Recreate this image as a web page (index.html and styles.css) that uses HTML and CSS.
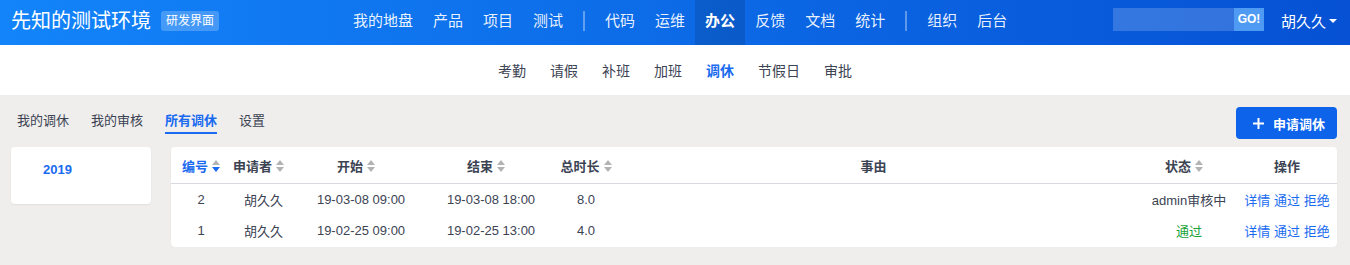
FILE: index.html
```html
<!DOCTYPE html>
<html lang="zh-CN">
<head>
    <meta charset="UTF-8">
    <title>调休 - 先知的测试环境</title>
    <link rel="stylesheet" href="styles.css">
</head>
<body>
    <header class="topbar">
        <div class="brand">
            <span class="brand-name">先知的测试环境</span>
            <span class="brand-tag">研发界面</span>
        </div>
        <nav class="mainnav">
            <a href="#">我的地盘</a>
            <a href="#">产品</a>
            <a href="#">项目</a>
            <a href="#">测试</a>
            <span class="divider"></span>
            <a href="#">代码</a>
            <a href="#">运维</a>
            <a href="#" class="active">办公</a>
            <a href="#">反馈</a>
            <a href="#">文档</a>
            <a href="#">统计</a>
            <span class="divider"></span>
            <a href="#">组织</a>
            <a href="#">后台</a>
        </nav>
        <div class="search">
            <input type="text">
            <button>GO!</button>
        </div>
        <div class="user">胡久久<span class="caret"></span></div>
    </header>

    <div class="subnav">
        <a href="#">考勤</a>
        <a href="#">请假</a>
        <a href="#">补班</a>
        <a href="#">加班</a>
        <a href="#" class="active">调休</a>
        <a href="#">节假日</a>
        <a href="#">审批</a>
    </div>

    <div class="page">
        <div class="toolbar">
            <div class="tabs">
                <a href="#">我的调休</a>
                <a href="#">我的审核</a>
                <a href="#" class="active">所有调休</a>
                <a href="#">设置</a>
            </div>
            <a href="#" class="btn-primary">
                <svg width="11" height="11" viewBox="0 0 11 11"><path d="M5.5 0v11M0 5.5h11" stroke="#fff" stroke-width="2"/></svg>
                申请调休
            </a>
        </div>

        <div class="main">
            <div class="side card">
                <a href="#" class="year">2019</a>
            </div>
            <div class="card list">
                <table>
                    <colgroup>
                        <col style="width:60px">
                        <col style="width:65px">
                        <col style="width:130px">
                        <col style="width:130px">
                        <col style="width:60px">
                        <col>
                        <col style="width:106px">
                        <col style="width:100px">
                    </colgroup>
                    <thead>
                        <tr>
                            <th class="sorted">编号<svg class="sort" width="8" height="12" viewBox="0 0 8 12"><path d="M0 5L4 0L8 5Z" fill="#b3b3b3"/><path d="M0 7H8L4 12Z" fill="#1a6bf0"/></svg></th>
                            <th class="shift">申请者<svg class="sort" width="8" height="12" viewBox="0 0 8 12"><path d="M0 5L4 0L8 5ZM0 7H8L4 12Z" fill="#b3b3b3"/></svg></th>
                            <th class="shift">开始<svg class="sort" width="8" height="12" viewBox="0 0 8 12"><path d="M0 5L4 0L8 5ZM0 7H8L4 12Z" fill="#b3b3b3"/></svg></th>
                            <th class="shift">结束<svg class="sort" width="8" height="12" viewBox="0 0 8 12"><path d="M0 5L4 0L8 5ZM0 7H8L4 12Z" fill="#b3b3b3"/></svg></th>
                            <th>总时长<svg class="sort" width="8" height="12" viewBox="0 0 8 12"><path d="M0 5L4 0L8 5ZM0 7H8L4 12Z" fill="#b3b3b3"/></svg></th>
                            <th>事由</th>
                            <th>状态<svg class="sort" width="8" height="12" viewBox="0 0 8 12"><path d="M0 5L4 0L8 5ZM0 7H8L4 12Z" fill="#b3b3b3"/></svg></th>
                            <th>操作</th>
                        </tr>
                    </thead>
                    <tbody>
                        <tr>
                            <td>2</td>
                            <td>胡久久</td>
                            <td>19-03-08 09:00</td>
                            <td>19-03-08 18:00</td>
                            <td>8.0</td>
                            <td></td>
                            <td class="status">admin审核中</td>
                            <td class="actions"><a href="#">详情</a> <a href="#">通过</a> <a href="#">拒绝</a></td>
                        </tr>
                        <tr>
                            <td>1</td>
                            <td>胡久久</td>
                            <td>19-02-25 09:00</td>
                            <td>19-02-25 13:00</td>
                            <td>4.0</td>
                            <td></td>
                            <td class="status pass">通过</td>
                            <td class="actions"><a href="#">详情</a> <a href="#">通过</a> <a href="#">拒绝</a></td>
                        </tr>
                    </tbody>
                </table>
            </div>
        </div>
    </div>
</body>
</html>
```

FILE: styles.css
```css
body{
    margin:0;
    background-color:#efeeec;
    color:#3c4353;
    font-family:"Liberation Sans","Noto Sans CJK SC",sans-serif;
    font-size:13px;
}
a{
    color:inherit;
    text-decoration:none;
}

/* top bar */
.topbar{
    display:flex;
    align-items:center;
    height:45px;
    padding:0 13px 0 11px;
    background:linear-gradient(90deg,#1384fa 0%,#0651d4 100%);
    color:#fff;
}
.brand{
    display:flex;
    align-items:center;
}
.brand-name{
    font-size:20px;
    line-height:24px;
    margin-top:-4px;
}
.brand-tag{
    margin-left:10px;
    margin-top:-4px;
    padding:0 5px;
    height:20px;
    line-height:20px;
    font-size:12px;
    border-radius:3px;
    background-color:rgba(255,255,255,.22);
}
.mainnav{
    display:flex;
    align-items:center;
    height:100%;
    margin-left:124px;
}
.mainnav>a{
    height:100%;
    padding:0 10px;
    line-height:41px;
    font-size:15px;
    color:rgba(255,255,255,.92);
}
.mainnav>a.active{
    background-color:rgba(0,0,0,.12);
    color:#fff;
    font-weight:bold;
}
.mainnav .divider{
    width:2px;
    height:20px;
    margin:-4px 10px 0;
    background-color:rgba(255,255,255,.35);
}
.search{
    display:flex;
    margin-left:auto;
    margin-top:-7px;
    height:23px;
}
.search input{
    width:121px;
    height:23px;
    box-sizing:border-box;
    border:0;
    padding:0 6px;
    background-color:rgba(255,255,255,.18);
    color:#fff;
    outline:none;
}
.search button{
    width:30px;
    height:23px;
    padding:0;
    border:0;
    background-color:#4f9bf4;
    color:#fff;
    font-family:"Liberation Sans",sans-serif;
    font-size:12px;
    font-weight:bold;
}
.user{
    display:flex;
    align-items:center;
    margin-left:17px;
    margin-top:-4px;
    font-size:15px;
}
.caret{
    width:0;
    height:0;
    margin-left:3px;
    border-left:4px solid transparent;
    border-right:4px solid transparent;
    border-top:4px solid #fff;
}

/* sub nav */
.subnav{
    display:flex;
    justify-content:center;
    align-items:center;
    gap:24px;
    height:50px;
    background-color:#fff;
    font-size:14px;
}
.subnav>a.active{
    color:#1a6bf0;
    font-weight:bold;
}

/* page */
.page{
    padding:0 13px 0 11px;
}
.toolbar{
    display:flex;
    justify-content:space-between;
    height:32px;
    margin-top:12px;
}
.tabs{
    display:flex;
    gap:22px;
    margin-left:6px;
    margin-top:4px;
    align-self:flex-start;
}
.tabs>a{
    line-height:20px;
    padding-bottom:1px;
    border-bottom:2px solid transparent;
}
.tabs>a.active{
    color:#1a6bf0;
    font-weight:bold;
    border-bottom-color:#1a6bf0;
}
.btn-primary{
    display:flex;
    align-items:center;
    gap:9px;
    padding:0 12px 0 17px;
    border-radius:4px;
    background-color:#0d64eb;
    color:#fff;
    font-weight:bold;
}

.main{
    display:flex;
    align-items:flex-start;
    gap:20px;
    margin-top:8px;
}
.card{
    background-color:#fff;
    border-radius:4px;
    box-shadow:0 1px 2px rgba(0,0,0,.06);
}
.side{
    width:140px;
    height:57px;
    box-sizing:border-box;
    padding:13px 0 0 32px;
}
.year{
    display:block;
    line-height:20px;
    color:#1a6bf0;
    font-weight:bold;
}
.list{
    flex:1;
    padding-bottom:1px;
}
table{
    width:100%;
    table-layout:fixed;
    border-collapse:collapse;
}
th{
    height:36px;
    padding:0;
    border-bottom:1px solid #d8d8e0;
    text-align:center;
    font-weight:bold;
    white-space:nowrap;
}
th.shift{
    padding-right:10px;
}
th.sorted{
    color:#1a6bf0;
}
.sort{
    margin-left:4px;
    vertical-align:-1px;
}
td{
    height:31px;
    padding:0;
    text-align:center;
    white-space:nowrap;
}
td.status{
    padding-left:10px;
}
td.pass{
    color:#1aa33a;
}
td.actions a{
    color:#1a6bf0;
}
```
